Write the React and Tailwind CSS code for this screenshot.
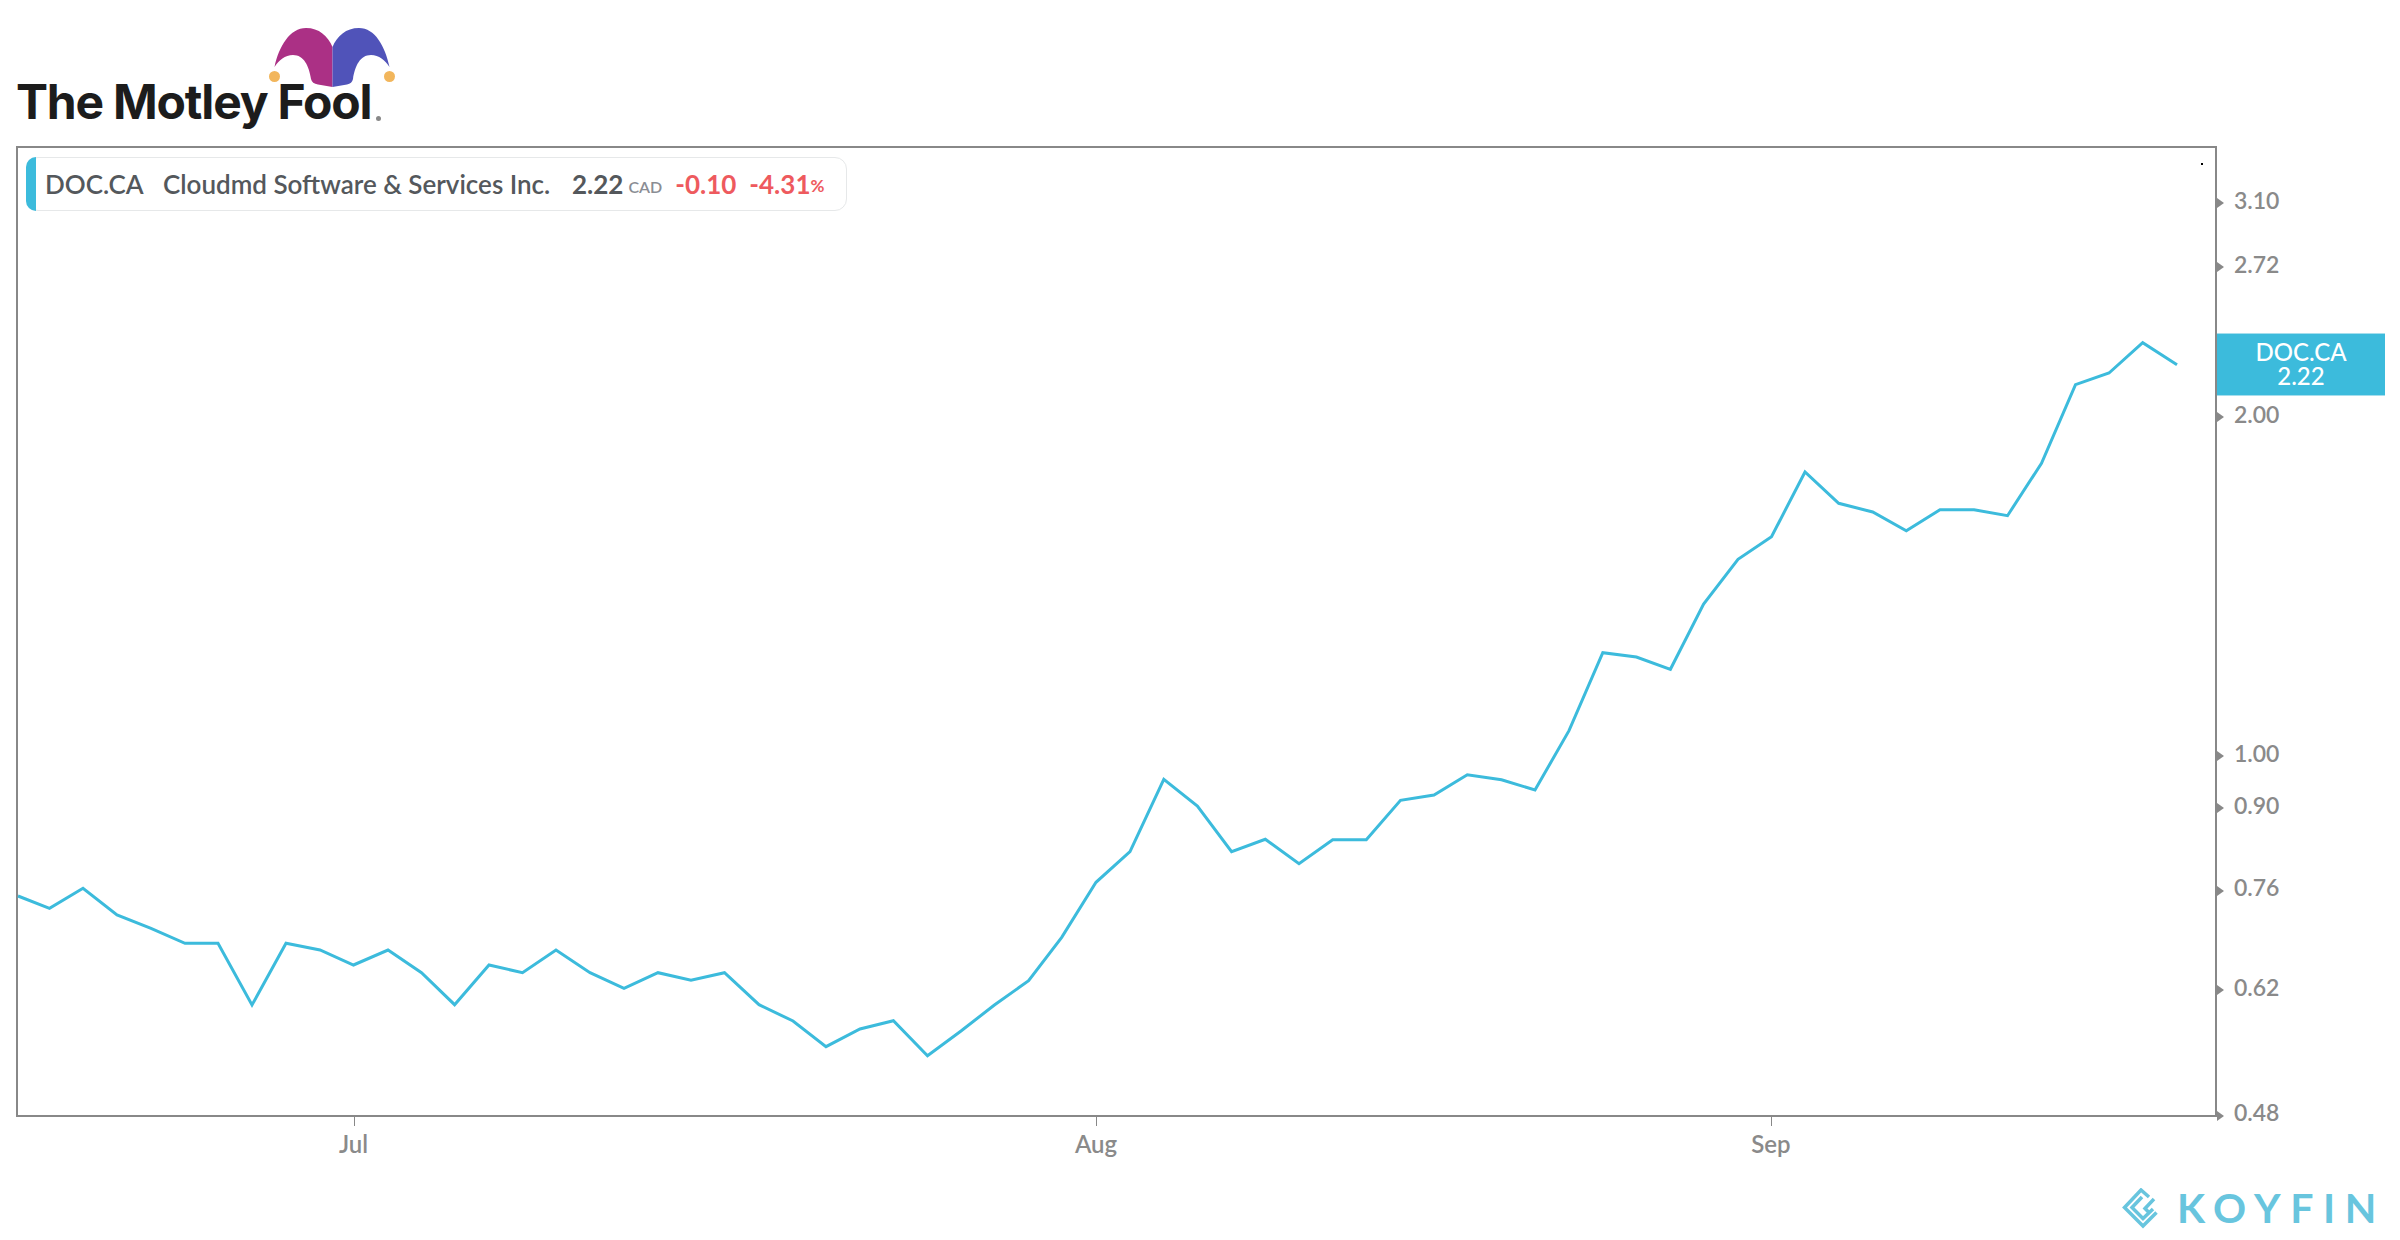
const pts = [[18,896],[49.5,908.3],[83,888.3],[117,915],[151,928.3],[185,943.3],[218,943.3],[252,1005],[286,943.3],[320,950],[353.5,965],[388,950],[421.5,972.7],[454.6,1004.7],[489,965],[522.5,972.7],[556,950],[590,972.7],[624,988.3],[658,972.7],[691,980.3],[724.5,972.7],[759,1004.7],[793,1021],[826,1046.7],[860,1029],[893.4,1020.7],[927.5,1055.7],[961,1031],[994.4,1005],[1028.6,980.7],[1061.7,937.3],[1096,882.3],[1130,851.7],[1163.8,779.3],[1197.4,806],[1231.6,851.7],[1265.3,839.3],[1299,863.7],[1332.7,839.7],[1366.3,839.7],[1400.5,800.3],[1434,795],[1467.3,774.7],[1501.5,779.7],[1535,790],[1569,730.7],[1602.8,652.7],[1636.4,657],[1670.4,669.3],[1703.6,604],[1738,559.3],[1771.5,536.7],[1805,472],[1838.7,503.3],[1872.7,512],[1906.3,530.7],[1940,509.7],[1974,509.7],[2007.5,515.7],[2041.5,463.3],[2075.5,384.7],[2109,373],[2142.7,342.7],[2177,364.7]];

const yLabels = [["3.10",200,203],["2.72",264,267],["2.00",414,417],["1.00",753,756],["0.90",805,808],["0.76",887,891],["0.62",987,990],["0.48",1112,1116]];
const xLabels = [["Jul",353.5],["Aug",1096],["Sep",1771]];
const lato = "font-['Lato','Liberation_Sans',sans-serif]";

function Hat() {
  return (
    <svg className="absolute left-[265px] top-[20px]" width="135" height="72" viewBox="265 20 135 72">
      <path d="M274.5 67C279 46 290 28 306 28C319 28 328 36 332.5 47V87L318 84.500Q312 83.500 311 79C309 66 304 55 293 55C285 55 279 60 274.500 67Z" fill="#ab3085" />
      <path d="M389.500 67C385 46 375 28 359 28C346 28 337 36 332.500 47V87L347 84.500Q352 83.500 353 79C355 66 360 55 371 55C379 55 385 60 389.500 67Z" fill="#5053b9" />
      <circle cx="274.500" cy="76.500" r="5.500" fill="#f2b65c" />
      <circle cx="389.500" cy="76.500" r="5.500" fill="#f2b65c" />
    </svg>
  );
}

function Legend() {
  return (
    <div className={`absolute left-[8px] top-[9px] flex h-[54px] w-[821px] items-center rounded-[12px] border border-[#e6e8e9] bg-white ${lato} text-[26px] font-semibold text-[#54585c]`}>
      <span className="absolute left-[-1px] top-[-1px] h-[54px] w-[10px] rounded-l-[10px] bg-[#3cbbdc]" />
      <span className="ml-[18px] w-[118px] shrink-0">DOC.CA</span>
      <span className="w-[409px] shrink-0 whitespace-nowrap">Cloudmd Software &amp; Services Inc.</span>
      <span className="font-bold">2.22</span>
      <span className="ml-[5px] mt-[6px] text-[16px] text-[#8a8d94]">CAD</span>
      <span className="ml-[13px] font-bold text-[#ee5a5e]">-0.10</span>
      <span className="ml-[13px] font-bold text-[#ee5a5e]">-4.31</span>
      <span className="mt-[4px] text-[17px] font-bold text-[#ee5a5e]">%</span>
    </div>
  );
}

function KoyfinMark() {
  return (
    <svg width="36" height="41" viewBox="0 0 36 41" className="mr-[19px] shrink-0" fill="none" stroke="#68c5de" strokeWidth="3.500">
      <path d="M27 9L19 2L2.500 19.500L21 38L34.500 24.500" />
      <path d="M20 9L10 19.500L21 30.500L31 21" />
      <path d="M32 11L23 20.500L27.500 25" />
    </svg>
  );
}

export default function App() {
  return (
    <div className="flex h-[1240px] w-[2400px] flex-col overflow-hidden bg-white">
      <header className="relative h-[146px] shrink-0">
        <Hat />
        <div className="absolute left-[16px] top-[71px] h-[59px] overflow-hidden whitespace-nowrap font-['Inter',sans-serif] text-[48px] font-bold leading-[62px] tracking-[-1.2px] text-[#1c1c1c]">
          The Motley Fool
        </div>
        <span className="absolute left-[376px] top-[116px] h-[5px] w-[5px] rounded-full bg-[#888]" />
      </header>

      <div className="flex h-[971px] shrink-0">
        <div className="relative ml-[16px] h-[971px] w-[2201px] shrink-0 border-2 border-[#888] bg-white">
          <svg className="absolute left-[-2px] top-[-2px]" width="2201" height="971" viewBox="16 146 2201 971">
            <polyline points={pts.map((p) => p.join(",")).join(" ")} fill="none" stroke="#3cbbdc" strokeWidth="3" strokeLinejoin="miter" />
          </svg>
          <Legend />
          <span className="absolute left-[2183px] top-[15px] h-[2px] w-[2px] bg-black" />
        </div>

        <div className={`relative w-[183px] shrink-0 ${lato} text-[23px] font-semibold text-[#8a8a8a]`}>
          {yLabels.map(([t, y, ty]) => (
            <div key={t}>
              <svg className="absolute left-0" style={{ top: ty - 146 - 6 }} width="7" height="12" viewBox="0 0 7 12">
                <path d="M0 1L7 6L0 11Z" fill="#888" />
              </svg>
              <span className="absolute left-[17px] leading-[24px]" style={{ top: y - 146 - 12 }}>{t}</span>
            </div>
          ))}
          <div className="absolute left-0 top-[187px] flex h-[63px] w-[168px] flex-col items-center justify-center border-y border-[#a5deed] bg-[#3cbbdc] pb-[2px] text-[24px] font-medium leading-[24px] text-white">
            <span>DOC.CA</span>
            <span>2.22</span>
          </div>
        </div>
      </div>

      <div className={`relative h-[50px] shrink-0 ${lato} text-[24px] font-semibold text-[#8a8a8a]`}>
        {xLabels.map(([t, x]) => (
          <div key={t}>
            <span className="absolute top-0 h-[9px] w-[1px] bg-[#888]" style={{ left: x }} />
            <span className="absolute top-[14px] -translate-x-1/2 leading-[26px]" style={{ left: x }}>{t}</span>
          </div>
        ))}
      </div>

      <footer className="flex h-[73px] items-start justify-end pr-[14px] pt-[21px]">
        <KoyfinMark />
        <span className="mt-[-1px] font-['Lato',sans-serif] text-[41px] font-bold leading-[41px] tracking-[9.6px] text-[#68c5de]">KOYFIN</span>
      </footer>
    </div>
  );
}
